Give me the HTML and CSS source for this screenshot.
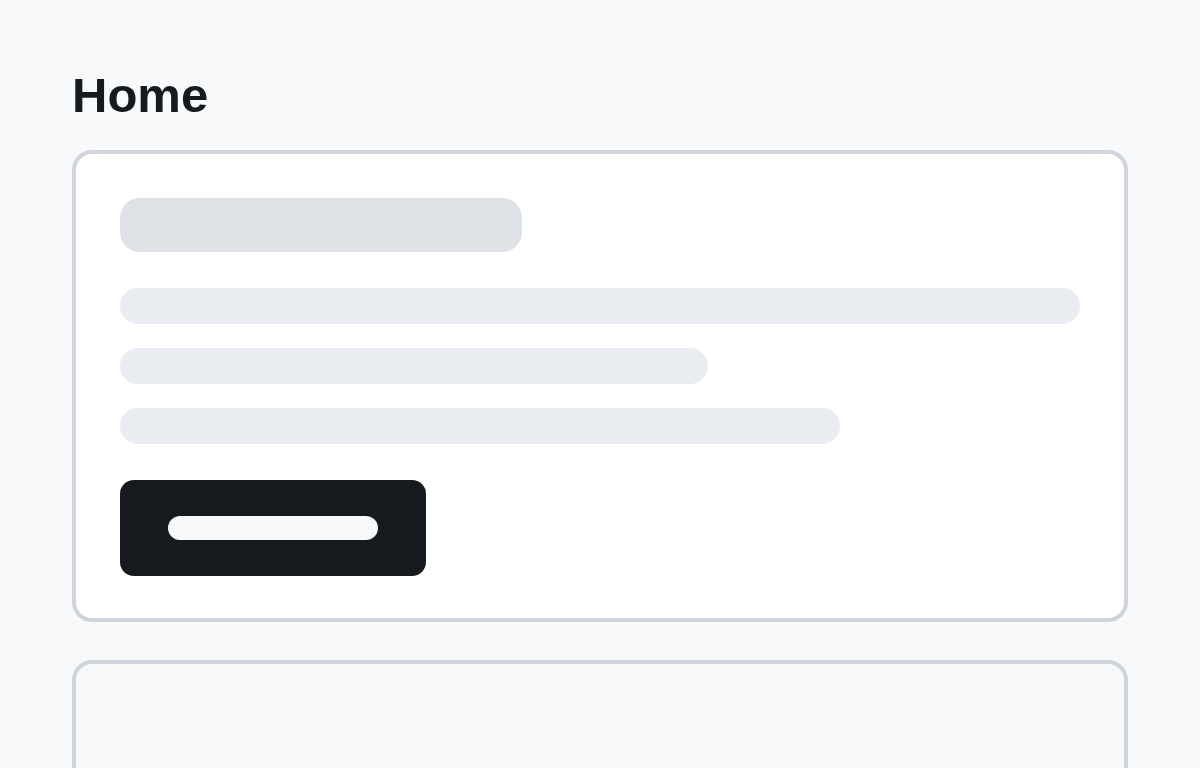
FILE: index.html
```html
<!DOCTYPE html>
<html lang="en">
<head>
  <meta charset="UTF-8"/>
  <meta name="viewport" content="width=device-width, initial-scale=1.0"/>
  <title>Home</title>
  <link rel="stylesheet" href="styles.css">
</head>
<body>
  <main class="page">
    <h1 class="page-title">Home</h1>

    <!-- loading card -->
    <section class="card">
      <div class="skel skel-title"></div>
      <div class="skel-lines">
        <div class="skel skel-line skel-full"></div>
        <div class="skel skel-line skel-short"></div>
        <div class="skel skel-line skel-mid"></div>
      </div>
      <div class="skel-button">
        <div class="skel-button-label"></div>
      </div>
    </section>

    <section class="card card-empty"></section>
  </main>
</body>
</html>
```

FILE: styles.css
```css
:root {
  --bg: #f8f9fa;
  --fg: #16191d;
  --card: #fff;
  --border: #d1d4da;
  --skel-strong: #dee1e6;
  --skel: #e9ecf0;
}

body {
  margin: 0;
  background-color: var(--bg);
  color: var(--fg);
  font-family: 'Liberation Sans', Arial, sans-serif;
}

.page {
  padding: 67px 72px 0;
}

.page-title {
  margin: 0 0 26px;
  font-size: 49px;
  font-weight: 700;
  line-height: 57px;
}

.card {
  background-color: var(--card);
  border: 4px solid var(--border);
  border-radius: 20px;
  padding: 44px 44px 42px;
  margin-bottom: 38px;
}

.card-empty {
  background-color: var(--bg);
  height: 200px;
  padding: 0;
}

.skel {
  background-color: var(--skel);
}

.skel-title {
  width: 402px;
  height: 54px;
  border-radius: 20px;
  background-color: var(--skel-strong);
}

.skel-lines {
  display: flex;
  flex-direction: column;
  gap: 24px;
  margin: 36px 0;
}

.skel-line {
  height: 36px;
  border-radius: 18px;
}

.skel-full { width: 100%; }
.skel-short { width: 588px; }
.skel-mid { width: 720px; }

.skel-button {
  display: flex;
  align-items: center;
  width: 306px;
  height: 96px;
  box-sizing: border-box;
  padding: 0 48px;
  background-color: var(--fg);
  border-radius: 14px;
}

.skel-button-label {
  width: 210px;
  height: 24px;
  border-radius: 12px;
  background-color: var(--bg);
}
```
